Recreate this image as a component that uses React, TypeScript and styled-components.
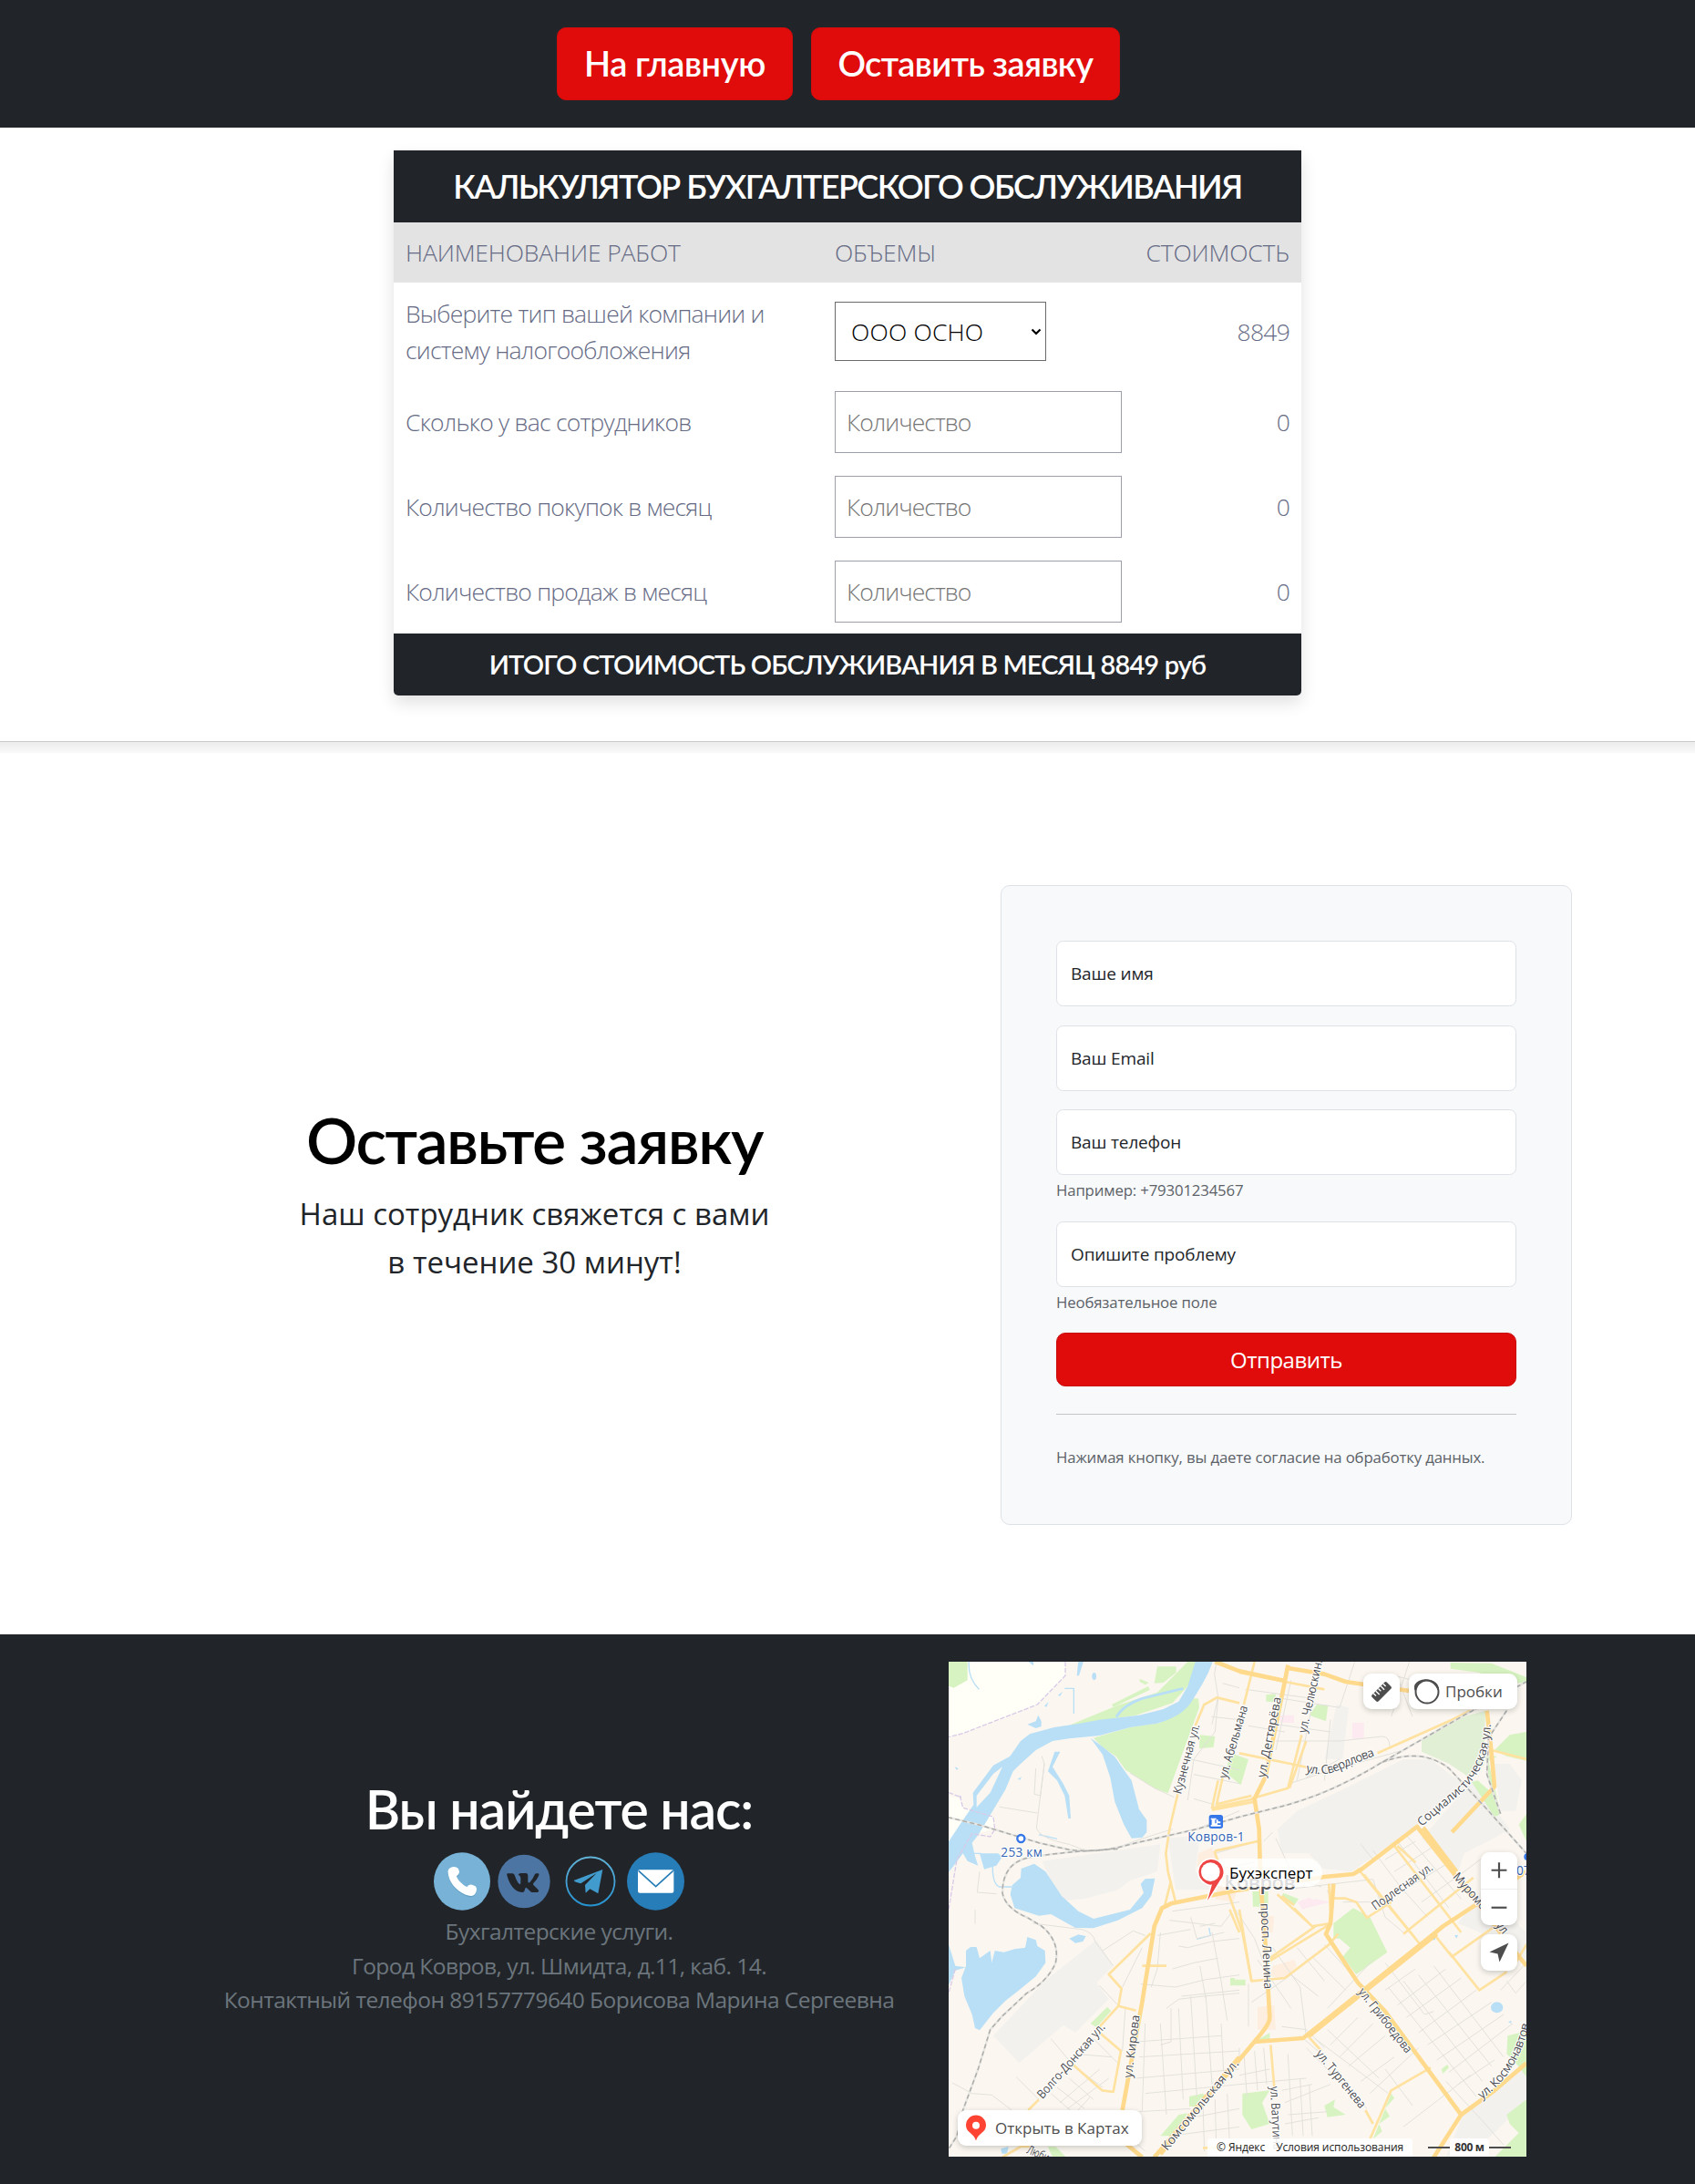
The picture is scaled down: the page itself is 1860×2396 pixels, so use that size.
import React, { useId, useState } from "react";
import styled, { createGlobalStyle } from "styled-components";

const heading = `Lato, "Noto Sans", sans-serif`;
const body = `"Open Sans", "Noto Sans", sans-serif`;

const GlobalStyle = createGlobalStyle`
  *, *::before, *::after { box-sizing: border-box; }
  body { margin: 0; background: #fff; color: #212529; font-family: ${body}; font-size: 20px; line-height: 1.5; }
  h1, h2, p { margin: 0; }
`;

/* ---------- Header ---------- */

const Header = styled.header`
  display: flex;
  justify-content: center;
  gap: 20px;
  height: 140px;
  padding: 30px 20px 30px 0;
  background: #212529;
`;

const NavButton = styled.button<{ $width: number; $spacing: number }>`
  width: ${(p) => p.$width}px;
  height: 80px;
  padding: 0 0 3px;
  border: 1px solid #d30c0c;
  border-radius: 10px;
  background: #df0c0b;
  color: #fff;
  font: 600 38px/1 ${heading};
  letter-spacing: ${(p) => p.$spacing}px;
  white-space: nowrap;
`;

/* ---------- Calculator ---------- */

const Calculator = styled.section`
  width: 996px;
  margin: 25px auto 0;
  border-radius: 0 0 5px 5px;
  overflow: hidden;
`;

const CalculatorShadow = styled.div`
  width: 996px;
  margin: 0 auto;
  border-radius: 5px;
  box-shadow: 0 8px 18px rgba(0, 0, 0, 0.12);
`;

const CalcBar = styled.div<{ $height: number; $size: number; $spacing: number }>`
  display: flex;
  align-items: center;
  justify-content: center;
  height: ${(p) => p.$height}px;
  padding-bottom: 2px;
  background: #212529;
  color: #fff;
  font: 600 ${(p) => p.$size}px/1 ${heading};
  letter-spacing: ${(p) => p.$spacing}px;
  white-space: nowrap;
`;

const CalcRow = styled.div<{ $height: number; $head?: boolean }>`
  display: grid;
  grid-template-columns: 471px 1fr 170px;
  align-items: center;
  height: ${(p) => p.$height}px;
  padding: 0 13px;
  background: ${(p) => (p.$head ? "#e3e3e3" : "#fff")};
  color: #666b85;
  font-size: 26.5px;
  font-weight: 300;
  line-height: 40px;
  letter-spacing: ${(p) => (p.$head ? -0.15 : -0.78)}px;
`;

const Cost = styled.span`
  text-align: right;
`;

const SelectWrap = styled.div`
  position: relative;
  display: flex;
  width: 232px;
  svg {
    position: absolute;
    right: 5px;
    top: 27px;
    pointer-events: none;
  }
`;

const Select = styled.select`
  appearance: none;
  width: 232px;
  height: 65px;
  padding: 0 17px;
  border: 1px solid #6b6b6b;
  border-radius: 0;
  background: #fff;
  color: #000;
  font: 300 26.5px ${body};
  letter-spacing: 0.2px;
`;

const CountInput = styled.input`
  width: 315px;
  height: 68px;
  padding: 0 12px;
  border: 1px solid #9c9eac;
  background: #fff;
  font: 300 26.5px ${body};
  letter-spacing: -0.95px;
  &::placeholder {
    color: #757575;
    opacity: 1;
  }
`;

const Divider = styled.div`
  height: 13px;
  margin-top: 50px;
  border-top: 1px solid #cacaca;
  background: linear-gradient(#ececec, #f9f9f9);
`;

/* ---------- Request ---------- */

const Request = styled.section`
  display: flex;
  align-items: center;
  justify-content: space-between;
  height: 967px;
  padding: 55px 135px 30px 205px;
`;

const Pitch = styled.div`
  width: 763px;
  padding-bottom: 26px;
  text-align: center;
`;

const PitchTitle = styled.h1`
  color: #000;
  font: 600 70px/84px ${heading};
  letter-spacing: -1.5px;
`;

const PitchText = styled.p`
  margin-top: 13px;
  font: 400 33px/53px ${body};
`;

const FormCard = styled.form`
  display: flex;
  flex-direction: column;
  width: 627px;
  height: 702px;
  padding: 60px;
  border: 1px solid #dee2e6;
  border-radius: 10px;
  background: #f8f9fb;
`;

const Field = styled.div`
  flex: none;
  margin-bottom: 20.5px;
`;

const TextInput = styled.input`
  display: block;
  width: 100%;
  height: 72px;
  padding: 0 15px;
  border: 1px solid #dee2e6;
  border-radius: 7.5px;
  background: #fff;
  color: #212529;
  font: 400 19px ${body};
  letter-spacing: -0.15px;
  &::placeholder {
    color: #212529;
    opacity: 1;
  }
`;

const Hint = styled.small`
  display: block;
  height: 30px;
  color: #5c6268;
  font-size: 16.8px;
  line-height: 33px;
  letter-spacing: -0.16px;
`;

const Submit = styled.button`
  height: 59px;
  flex: none;
  border: 1px solid #c90d0d;
  border-radius: 10px;
  background: #df0c0b;
  color: #fff;
  font: 400 24px/1 ${body};
  letter-spacing: -0.5px;
`;

const Rule = styled.hr`
  flex: none;
  width: 100%;
  height: 1px;
  margin: 30px 0;
  border: 0;
  background: #c3c5c8;
`;

/* ---------- Footer ---------- */

const Footer = styled.footer`
  display: flex;
  justify-content: space-between;
  align-items: center;
  height: 603px;
  padding: 0 185px 0 186px;
  background: #212529;
`;

const Contacts = styled.div`
  display: flex;
  flex-direction: column;
  align-items: center;
  width: 855px;
  padding-bottom: 29px;
`;

const ContactsTitle = styled.h2`
  color: #fff;
  font: 600 59px/76px ${heading};
  letter-spacing: -1.1px;
  white-space: nowrap;
`;

const Socials = styled.div`
  display: flex;
  align-items: center;
  gap: 8px;
  height: 64px;
  margin: 9px 0 4px;
`;

const SocialLink = styled.a<{ $gap?: number }>`
  display: flex;
  margin-left: ${(p) => p.$gap ?? 0}px;
`;

const ContactLine = styled.p`
  color: #6c757d;
  font-size: 24.5px;
  line-height: 37.5px;
  white-space: nowrap;
  letter-spacing: -0.55px;
`;

const MapFrame = styled.div`
  position: relative;
  width: 634px;
  height: 543px;
  overflow: hidden;
  background: #fbf7f0;
  font-family: ${body};
`;

const MapSvg = styled.svg`
  display: block;
  width: 634px;
  height: 543px;
`;

const MapControl = styled.div<{ $x: number; $y: number; $w: number; $h: number }>`
  position: absolute;
  left: ${(p) => p.$x}px;
  top: ${(p) => p.$y}px;
  width: ${(p) => p.$w}px;
  height: ${(p) => p.$h}px;
  display: flex;
  align-items: center;
  justify-content: center;
  border-radius: 9px;
  background: #fff;
  box-shadow: 0 2px 6px rgba(0, 0, 0, 0.2);
  color: #4d4d4d;
  font-size: 17px;
  white-space: nowrap;
`;

const LabelledControl = styled(MapControl)<{ $pad: number; $gap: number }>`
  justify-content: flex-start;
  padding-left: ${(p) => p.$pad}px;
  gap: ${(p) => p.$gap}px;
`;

const ZoomControl = styled(MapControl)`
  flex-direction: column;
  svg {
    flex: 1;
  }
  svg + svg {
    border-top: 1px solid #eee;
  }
`;

const PlaceTag = styled.div`
  position: absolute;
  left: 287px;
  top: 216px;
  width: 123px;
  height: 31px;
  padding-left: 21px;
  border-radius: 16px;
  background: rgba(255, 255, 255, 0.8);
  color: #000;
  font-size: 17px;
  line-height: 31px;
`;

const MapNote = styled.div<{ $x: number; $w: number }>`
  position: absolute;
  left: ${(p) => p.$x}px;
  bottom: 0;
  width: ${(p) => p.$w}px;
  height: 20px;
  display: flex;
  justify-content: space-between;
  padding: 0 10px;
  border-radius: 4px 4px 0 0;
  background: rgba(255, 255, 255, 0.88);
  color: #222;
  font-size: 12px;
  line-height: 20px;
  letter-spacing: -0.1px;
  white-space: nowrap;
`;

const ScaleBar = styled.div`
  position: absolute;
  right: 17px;
  bottom: 0;
  display: flex;
  align-items: center;
  width: 91px;
  height: 20px;
  font-size: 12px;
  line-height: 20px;
  color: #333;
  i {
    flex: 1;
    height: 2px;
    background: #4d4d4d;
  }
  b {
    width: 43px;
    border-radius: 4px 4px 0 0;
    background: rgba(255, 255, 255, 0.9);
    text-align: center;
    white-space: nowrap;
    letter-spacing: -0.3px;
  }
`;

const Pin = styled.svg`
  position: absolute;
  left: 269px;
  top: 214px;
`;

/* ---------- Map drawing ---------- */

const WATER = [
  "M815 9H872C855 60 825 105 800 145C775 180 735 200 690 212L600 225L500 252L400 262L345 270L290 300L240 345L215 370L190 430L160 480L130 530L100 580L80 605L90 650L100 680L65 665L50 640L20 680L0 705V605L50 530L85 480L83 440L150 350L205 320L240 270L270 247L350 225L430 213L500 200L630 185L710 165L760 140L790 90Z",
  "M470 260L505 285L550 322L580 365L605 400L630 495L655 530V570L640 588L605 590L580 545L550 470L535 390L510 315Z",
  "M242 690L285 674L322 700L375 780L430 830L480 855L600 825L645 770L635 740L650 724L682 722L670 780L640 820L560 860L480 886L420 885L340 840L300 845L220 820L206 775L212 745L240 720Z",
  "M105 640H165L180 650L160 680L120 692Z",
  "M60 960L75 948H95L105 985L140 960L145 1000L155 960L185 965L220 955L255 950L262 915L290 925L295 945L320 960L322 1000L290 1045L235 1090L190 1125L150 1165L105 1222L90 1215L80 1170L55 1110L45 1050L60 1010Z",
  "M0 930L25 1010L60 1015L25 1025L0 1080Z",
  "M262 215L290 205L298 185L308 205V222L290 228Z",
  "M430 5H448L432 55H425Z",
  "M260 5H282V22Z",
  "M352 305H370L345 355L380 410L400 450L405 525H397L385 450L360 400L330 370Z",
  "M400 920L430 907L455 912L445 930L420 935Z",
  "M175 1612L200 1605L195 1628H178Z",
];

const PARKS = [
  "M3 9H65V70L20 95L0 88Z",
  "M400 218L560 152L690 110L790 9H830L790 90L740 145L620 185Z",
  "M480 260L600 225L700 210L770 170L800 130H825L828 160L725 442L680 425L610 380L585 365L555 322L510 290Z",
  "M690 25H752V45L710 78L680 80Z",
  "M632 65L662 78L650 85L632 75Z",
  "M540 150L660 90L665 102L545 158Z",
  "M830 250L880 255L875 290L828 295Z",
  "M930 310L990 330L965 415L915 375Z",
  "M1048 118L1080 115L1075 142L1048 140Z",
  "M1190 185L1215 150L1252 152L1245 205Z",
  "M1655 12L1790 14L1905 60V80L1820 75L1750 45L1655 32Z",
  "M1800 300L1850 250L1905 240V335L1840 320Z",
  "M1770 320H1810L1780 335L1820 510L1800 520L1725 405L1745 400L1790 440Z",
  "M1880 545L1905 510V600Z",
  "M1270 870L1335 820L1390 850L1447 965L1345 1038L1300 980L1325 950L1290 920L1270 920Z",
  "M1003 765H1055V815H1005Z",
  "M1105 770L1155 790L1140 812L1095 790Z",
  "M470 1200L525 1145L538 1158L490 1212Z",
  "M930 1050H945V1055H980V1075H930Z",
  "M795 1440L840 1430L850 1445L830 1475L795 1472Z",
  "M700 1570L760 1500L790 1495L740 1570Z",
  "M330 1605H355L390 1640H345Z",
  "M970 1430L1060 1420L1035 1460L1060 1530L1000 1548L970 1500Z",
  "M1010 1260L1060 1230V1255Z",
  "M1240 1470L1275 1450L1270 1475L1310 1500L1250 1508Z",
  "M1315 1135L1360 1105L1350 1120L1325 1142Z",
  "M1843 1240L1905 1225V1375L1870 1330L1840 1300Z",
  "M1905 1450L1840 1500L1850 1530L1880 1560L1850 1590L1800 1640H1905Z",
  "M1625 1350L1645 1335L1650 1345L1630 1365Z",
  "M1460 1430L1470 1445L1440 1480L1455 1505L1420 1530L1430 1555L1400 1580Z",
];

const BLOCKS = [
  "M310 665L700 610L690 700L600 730L560 760L450 790L390 795L350 750Z",
  "M1085 560L1150 500L1300 430L1500 330L1590 330L1680 400L1720 410L1550 545L1330 700L1230 690L1190 640L1100 640Z",
  "M150 1240L320 1060L490 925L545 1010L490 1065L530 1120L420 1230L380 1205L235 1330Z",
  "M1560 590L1730 400L1850 560L1780 600L1700 640L1680 700L1630 660Z",
  "M725 590L830 580L815 700L880 760L750 760Z",
  "M1280 150L1320 160L1300 330L1240 330Z",
  "M1680 870L1760 760L1905 900V1000L1800 920Z",
  "M1700 1490L1905 1330V1450L1800 1560L1700 1640H1640Z",
  "M1800 345H1850L1890 400L1870 500H1820Z",
];

const WARM = [
  "M825 640L870 620L900 700L960 740L940 800L880 790L890 740L820 680Z",
  "M1040 850L1075 845L1070 900L1040 900Z",
  "M1070 1010L1140 990L1150 1010L1110 1050L1060 1045Z",
  "M1020 1145L1075 1140L1080 1220H1020Z",
];

const GLADE = "M1560 265L1660 200L1770 170L1765 350L1710 385L1650 345L1560 305Z";

const LANES = [
  "M310 320L318 345L292 555Q300 590 400 610Q480 650 560 620T740 560",
  "M290 360L285 445L305 450L318 345M170 487L295 507M600 375L680 425L745 455M105 700L97 768L160 773",
  "M885 9L878 50L890 125L870 215M868 190L960 200M905 80L960 95M800 330L960 365M790 465L810 330L880 240L890 130M810 380L960 410M810 460L880 480",
  "M15 1395L80 1430L145 1435L230 1500M225 1375L300 1450M340 1250L415 1340L510 1410M420 1300L540 1310M480 1250L560 1330M370 1460L500 1350M395 1480L530 1380M420 1495L470 1440M340 1430L420 1500M360 1410L450 1480M400 1380L480 1450",
  "M635 1070L750 1080L850 1055L960 1040M700 900L690 1020L670 1080M760 945L790 950L870 930L960 920M770 1110L960 1090M720 1150L760 1120L840 1110L960 1100M735 1150V1260L700 1270M740 1020L810 1000L890 985M870 900L900 1060L920 1190M830 880L880 870M830 1010L850 1120",
  "M630 1310L960 1290M620 1380L960 1350M620 1260L900 1240M650 1430L960 1400M700 1200L720 1500M760 1150L775 1450M800 1110L820 1440M850 1110L870 1400M900 1200L910 1400M650 1200L640 1490M630 1490L800 1480",
  "M840 1460L845 1620M880 1450L885 1640M920 1430L930 1640M800 1510L960 1480M730 1570L960 1540M600 1575L650 1620",
  "M960 1280V1340M975 1300L985 1440M1010 1290L1020 1420M1040 1280L1050 1400M1120 1300L1135 1570M1160 1380L1170 1570M1190 1400L1200 1570M960 1370L1060 1350M960 1400L1180 1380M1100 1420L1200 1400M1110 1460L1260 1400M1120 1500L1250 1490M1110 1530L1220 1510",
  "M1180 1280L1380 1480M1210 1250L1450 1430M1250 1220L1420 1380M1160 1240L1230 1300M1260 1270L1350 1180M1290 1310L1400 1200M1320 1340L1440 1240M1360 1390L1470 1310M1390 1430L1550 1280",
  "M1450 1080L1740 1440M1500 1060L1760 1390M1550 1040L1790 1340M1600 1010L1830 1310M1440 1090L1540 1020M1480 1140L1640 1020M1510 1180L1690 1050M1550 1230L1740 1090M1580 1270L1790 1130M1610 1320L1830 1170M1650 1360L1860 1200M1680 1400L1800 1320M1440 1000L1570 1170L1600 1160M1840 1060L1870 1100L1905 1060M1820 1090L1905 1000",
  "M1020 990L1110 1120L1130 1150M1070 950L1160 1080L1180 1240M1150 950L1240 1060M1240 940L1350 1060M1200 980L1310 1090M1100 1210L1180 1220L1240 1280M990 1070V1210M1000 1130L1130 1040L1220 1110M1250 1150L1400 990",
  "M1080 270L1290 270L1430 255Q1455 255 1455 290L1420 310M1080 215L1260 240M1260 200L1240 400M1130 70L1080 300M1100 130L1290 160L1340 9M1220 50L1150 400M980 100L1200 130M990 220L1110 240M1480 60L1530 190M1520 9L1460 190M1450 50L1530 70M1125 410L1250 370L1500 300M1180 390L1290 330",
  "M1040 600L1070 570M1080 590L1140 720L1230 750M1100 760L1400 725M1250 760L1270 820M1300 800L1450 800M1400 725L1440 850L1500 900M1400 630L1490 750L1580 850M1480 600L1650 820M1510 580L1690 790M1440 660L1540 600M1470 700L1610 610M1520 750L1650 670M1560 800L1700 700L1780 640M1360 610L1400 660",
  "M740 830L960 800M730 860L900 880L930 840M690 910L800 890M800 850L820 920L910 900M930 800L1010 920L1040 1000M820 560L960 500M880 640L1020 600M900 690L1010 670M1500 1540L1720 1370M1640 1390L1760 1520L1830 1600M1440 1350L1530 1470",
  "M280 870L440 890Q480 900 485 930L545 1010M510 960L610 895L650 910M640 950L575 1080M500 1075L565 1145M585 1145L575 1290M90 825V872",
];

const MINOR = [
  "M757 445L730 560L718 640L725 700L750 800M735 730L715 810",
  "M890 400L870 490L1010 460M905 390L885 478L1000 450M870 497L1010 470M880 632L1020 600M878 632L920 760",
  "M920 760L970 900L1000 1060L1110 1050L1255 940L1285 905",
  "M668 903L530 1038L572 1085L562 1142L620 1157M562 1142L500 1210M500 1230L570 1290L545 1425L508 1420L412 1335M300 1450L265 1485",
  "M928 825L960 900M840 1610L1000 1600",
  "M1255 740L1260 830M1260 788H1310L1345 800L1380 852L1460 800M1350 690L1560 945M1370 710L1540 920M1470 615L1690 900M1500 905L1730 720M1480 615L1540 670",
  "M1050 1000L1255 875M1085 775L1200 880L1260 870M1060 985L1210 880M1100 780L1140 810M1200 880L1140 820",
  "M1063 1270L1075 1410M1185 1240L1230 1290M1375 1485L1400 1530M1590 1345L1460 1420L1390 1580M1600 905L1660 980L1830 860M1650 965L1750 1090L1840 1030M1905 940L1870 1000",
  "M960 45L1110 75L1240 100M1010 9L975 150M960 310L1200 360M1165 250L1120 425L1000 460M890 128L960 145M845 150L890 125M845 148L815 220M1125 425L1180 270",
  "M1415 310L1660 200L1720 170M180 1640L240 1605H270L310 1640M1790 300L1905 330",
  "M640 1010L720 1010M960 825L1000 1060",
];

const MAJOR = [
  "M880 9L960 40L1110 72M1120 30L1240 50L1310 75L1520 105M1110 72L1045 390L1010 460L1025 560L1030 740L1040 860L1050 1000L1060 1180Q1060 1200 1030 1235L700 1630",
  "M575 1485L640 1130L680 880L705 820L735 805L960 760L1240 717L1335 708L1365 690L1545 552L1905 1010",
  "M1565 555L1675 700M1660 570L1800 420Q1790 300 1775 170",
  "M1010 1260L1170 1248L1600 905L1630 880L1905 700M1270 740L1260 870L1245 905L1350 1065L1440 1160L1690 1500L1600 1640M1690 1500L1800 1420L1905 1330M1190 1240L1240 1200L1610 905",
  "M1120 20L1110 72M575 1485L580 1590L640 1640M680 1640L960 1310",
];

const RAIL = [
  "M0 521L100 545L200 575L300 605L400 628Q500 640 600 610L820 560L960 520L1080 490Q1250 450 1430 340L1700 185L1905 75",
  "M1430 340Q1560 290 1650 360L1780 500L1905 640",
  "M560 625L450 632Q350 640 290 650Q180 660 180 770Q190 820 260 850L310 880Q370 930 355 1000Q330 1060 260 1100L180 1175L140 1220L100 1350L50 1485L30 1570L5 1610",
  "M1840 170L1780 260L1775 380L1820 510",
];

const BORDER =
  "M387 9V55L295 150L50 245L3 257M40 450L50 490L150 520L155 560L140 585L80 575L30 660L3 825M25 1020L3 1100M3 440L45 455";

interface StreetProps {
  x1: number;
  y1: number;
  x2: number;
  y2: number;
  children: string;
}

function Street({ x1, y1, x2, y2, children }: StreetProps) {
  const angle = (Math.atan2(y2 - y1, x2 - x1) * 180) / Math.PI;
  const length = Math.hypot(x2 - x1, y2 - y1);
  return (
    <text transform={`translate(${x1} ${y1}) rotate(${angle})`} textLength={length} lengthAdjust="spacingAndGlyphs">
      {children}
    </text>
  );
}

function CurvedStreet({ d, length, children }: { d: string; length: number; children: string }) {
  const id = useId();
  return (
    <>
      <path id={id} d={d} fill="none" stroke="none" />
      <text textLength={length}>
        <textPath href={`#${id}`}>{children}</textPath>
      </text>
    </>
  );
}

function CityMap() {
  return (
    <MapSvg viewBox="3 9 1902 1629">
      <rect x="0" y="0" width="1910" height="1640" fill="#fbf7f0" />
      <path d="M0 9H387V55L295 150L50 245L0 257ZM0 450L40 460L50 490L150 520L155 560L80 575L0 640Z" fill="#fffff8" />
      <g fill="#f2f1ed">{BLOCKS.map((d) => <path key={d} d={d} />)}</g>
      <g fill="#fdeee0">{WARM.map((d) => <path key={d} d={d} />)}</g>
      <path d="M1095 185H1140V210H1095ZM1332 210H1370V262H1332ZM1150 800L1190 785L1220 800L1170 825ZM1160 825L1210 790L1260 800Z" fill="#fdeaf1" />
      <g fill="#d7f3c1">{PARKS.map((d) => <path key={d} d={d} />)}</g>
      <path d={GLADE} fill="#e1efd5" />
      <g fill="#b8dff6">
        {WATER.map((d) => <path key={d} d={d} />)}
        <ellipse cx="1808" cy="1147" rx="20" ry="18" />
        <ellipse cx="482" cy="57" rx="7" ry="12" />
        <path d="M1590 925L1605 915V925ZM1668 910L1680 908L1675 920ZM1845 1195L1855 1190V1200ZM22 355L35 360L30 366ZM318 155L332 140L325 158ZM362 120L378 107L370 122ZM230 395L243 388L238 398Z" />
      </g>
      <path d="M95 450L150 378L180 355L140 440L95 488Z" fill="#fbf7f0" />
      <g fill="none" stroke="#b8dff6" strokeWidth="6">
        <path d="M555 190Q580 150 640 130L775 97" strokeWidth="9" />
        <path d="M70 9Q65 60 103 100M415 95V180M385 97H415M148 670Q145 740 170 750H210M300 578L360 592M75 640H110M820 922L865 910L860 885" strokeWidth="4" />
      </g>
      <path d={BORDER} fill="none" stroke="#d9cbe8" strokeWidth="4" strokeDasharray="16 5" />
      <g fill="none" stroke="#e3e1dc" strokeWidth="3">{LANES.map((d) => <path key={d} d={d} />)}</g>
      <g fill="none" stroke="#ffe1a0" strokeWidth="8" strokeLinejoin="round">{MINOR.map((d) => <path key={d} d={d} />)}</g>
      <g fill="none" stroke="#ffd98c" strokeWidth="14" strokeLinejoin="round">{MAJOR.map((d) => <path key={d} d={d} />)}</g>
      <g fill="none" stroke="#e6e5e1" strokeWidth="7">{RAIL.map((d) => <path key={d} d={d} />)}</g>
      <g fill="none" stroke="#adadab" strokeWidth="4.5" strokeDasharray="15 10">{RAIL.map((d) => <path key={d} d={d} />)}</g>

      <g fontSize="40" fill="#4c4d51" stroke="#fff" strokeWidth="6" paintOrder="stroke" strokeLinejoin="round">
        <Street x1={768} y1={446} x2={830} y2={218}>Кузнечная ул.</Street>
        <Street x1={918} y1={395} x2={988} y2={158}>ул. Абельмана</Street>
        <Street x1={1045} y1={392} x2={1098} y2={128}>ул. Дегтярёва</Street>
        <Street x1={1180} y1={245} x2={1246} y2={-48}>ул. Челюскинцев</Street>
        <CurvedStreet d="M1178 372Q1240 388 1290 365T1430 310" length={240}>ул. Свердлова</CurvedStreet>
        <CurvedStreet d="M1560 552L1690 442Q1792 350 1788 180" length={425}>Социалистическая ул.</CurvedStreet>
        <Street x1={1408} y1={828} x2={1600} y2={692}>Подлесная ул.</Street>
        <Street x1={1661} y1={718} x2={1835} y2={915}>Муромская ул.</Street>
        <Street x1={1030} y1={805} x2={1042} y2={1087}>просп. Ленина</Street>
        <Street x1={606} y1={1380} x2={632} y2={1173}>ул. Кирова</Street>
        <Street x1={312} y1={1450} x2={520} y2={1213}>Волго-Донская ул.</Street>
        <Street x1={722} y1={1620} x2={960} y2={1333}>Комсомольская ул.</Street>
        <Street x1={1350} y1={1096} x2={1510} y2={1300}>ул. Грибоедова</Street>
        <Street x1={1210} y1={1300} x2={1358} y2={1482}>ул. Тургенева</Street>
        <Street x1={1062} y1={1407} x2={1072} y2={1615}>ул. Ватутина</Street>
        <CurvedStreet d="M1758 1450Q1895 1350 1922 1160" length={300}>ул. Космонавтов</CurvedStreet>
        <Street x1={258} y1={1625} x2={360} y2={1670}>Любимо</Street>
      </g>

      <text x="910" y="760" fontSize="66" fontWeight="600" fill="#55565a" textLength="235" stroke="#fff" strokeWidth="6" paintOrder="stroke">Ковров</text>

      <g fontSize="41" fill="#3363b4" stroke="#fff" strokeWidth="6" paintOrder="stroke">
        <text x="175" y="650" textLength="136">253 км</text>
        <text x="790" y="600" textLength="187">Ковров-1</text>
        <text x="1872" y="711">07</text>
      </g>
      <circle cx="241" cy="591" r="12" fill="#fff" stroke="#3576e8" strokeWidth="7" />
      <circle cx="1909" cy="651" r="12" fill="#3576e8" />
      <rect x="860" y="513" width="46" height="45" rx="8" fill="#3576e8" />
      <path d="M866 524H884V529H880V541H884V529H890V535H898V541H888V546H899V551H866V546H869V529H866Z" fill="#fff" />
    </MapSvg>
  );
}

/* ---------- Icons ---------- */

function PhoneIcon() {
  return (
    <svg width="62" height="64" viewBox="0 0 186 192">
      <ellipse cx="93" cy="96" rx="93" ry="95" fill="#78b3d7" />
      <path d="M49 57C57 47 73 46 81 56L84 65Q85 73 75 80C79 94 95 109 109 115Q117 106 126 108L137 113Q144 119 139 133C134 145 125 148 111 143C76 131 50 101 47 69Q46 61 49 57Z" fill="#5c9abf" transform="translate(0 3)" opacity=".7" />
      <path d="M49 56C57 46 73 45 81 55L84 64Q85 72 75 79C79 93 95 108 109 114Q117 105 126 107L137 112Q144 118 139 132C134 144 125 147 111 142C76 130 50 100 47 68Q46 60 49 56Z" fill="#fff" />
    </svg>
  );
}

function VkIcon() {
  return (
    <svg width="58" height="60" viewBox="0 0 174 180">
      <ellipse cx="87" cy="90" rx="86" ry="88" fill="#4c75a3" />
      <path d="M32 64H49Q54 64 56 69C60 82 65 93 72 99Q76 101 76 94V78Q75 70 68 68Q70 63 77 63H94Q100 63 100 71V91Q102 98 108 91Q117 80 122 68Q124 64 129 64H135Q138 67 135 72C131 82 124 90 118 96Q115 100 119 103L134 118Q138 124 131 126H114Q109 126 105 120Q98 112 94 110Q90 111 89 120Q88 126 82 126C58 127 39 102 31 70Q30 65 32 64Z" fill="#212529" />
    </svg>
  );
}

function TelegramIcon() {
  return (
    <svg width="56" height="56" viewBox="0 0 168 168">
      <defs>
        <linearGradient id="telegram" x1="0" y1="0" x2="0" y2="1">
          <stop offset="0" stopColor="#62b2d8" />
          <stop offset="1" stopColor="#2693d0" />
        </linearGradient>
      </defs>
      <circle cx="84" cy="84" r="79.5" fill="none" stroke="url(#telegram)" strokeWidth="5.5" />
      <path d="M124 45L29 81Q32 87 52 91L104 57L66 96L68 122L82 109L109 124Z" fill="#429bcd" />
    </svg>
  );
}

function MailIcon() {
  return (
    <svg width="63" height="64" viewBox="0 0 189 192">
      <ellipse cx="94.5" cy="96" rx="94.5" ry="95" fill="#267db8" />
      <rect x="36" y="58" width="118" height="76" rx="6" fill="#fff" />
      <path d="M38 61L95 113L152 61" fill="none" stroke="#267db8" strokeWidth="5" />
    </svg>
  );
}

/* ---------- Page ---------- */

const COUNTS = ["Сколько у вас сотрудников", "Количество покупок в месяц", "Количество продаж в месяц"];

export default function App() {
  const [kind, setKind] = useState("osno");
  return (
    <>
      <GlobalStyle />
      <Header>
        <NavButton $width={259} $spacing={-0.4}>На главную</NavButton>
        <NavButton $width={339} $spacing={-0.6}>Оставить заявку</NavButton>
      </Header>

      <CalculatorShadow>
        <Calculator>
          <CalcBar $height={79} $size={36} $spacing={-1.55}>КАЛЬКУЛЯТОР БУХГАЛТЕРСКОГО ОБСЛУЖИВАНИЯ</CalcBar>
          <CalcRow $height={66} $head>
            <span>НАИМЕНОВАНИЕ РАБОТ</span>
            <span>ОБЪЕМЫ</span>
            <Cost>СТОИМОСТЬ</Cost>
          </CalcRow>
          <CalcRow $height={107}>
            <span>
              Выберите тип вашей компании и<br />
              систему налогообложения
            </span>
            <SelectWrap>
              <Select value={kind} onChange={(e) => setKind(e.target.value)}>
                <option value="osno">ООО ОСНО</option>
              </Select>
              <svg width="12" height="12" viewBox="0 0 12 12">
                <path d="M1.5 3.5L6 8L10.5 3.5" fill="none" stroke="#000" strokeWidth="2.2" />
              </svg>
            </SelectWrap>
            <Cost>8849</Cost>
          </CalcRow>
          {COUNTS.map((label) => (
            <CalcRow $height={92.7} key={label}>
              <span>{label}</span>
              <CountInput placeholder="Количество" />
              <Cost>0</Cost>
            </CalcRow>
          ))}
          <CalcBar $height={68} $size={29} $spacing={-0.85}>ИТОГО СТОИМОСТЬ ОБСЛУЖИВАНИЯ В МЕСЯЦ 8849 руб</CalcBar>
        </Calculator>
      </CalculatorShadow>
      <Divider />

      <Request>
        <Pitch>
          <PitchTitle>Оставьте заявку</PitchTitle>
          <PitchText>
            Наш сотрудник свяжется с вами
            <br />в течение 30 минут!
          </PitchText>
        </Pitch>
        <FormCard>
          <Field>
            <TextInput placeholder="Ваше имя" />
          </Field>
          <Field>
            <TextInput placeholder="Ваш Email" />
          </Field>
          <Field>
            <TextInput placeholder="Ваш телефон" />
            <Hint>Например: +79301234567</Hint>
          </Field>
          <Field>
            <TextInput placeholder="Опишите проблему" />
            <Hint>Необязательное поле</Hint>
          </Field>
          <Submit type="button">Отправить</Submit>
          <Rule />
          <Hint>Нажимая кнопку, вы даете согласие на обработку данных.</Hint>
        </FormCard>
      </Request>

      <Footer>
        <Contacts>
          <ContactsTitle>Вы найдете нас:</ContactsTitle>
          <Socials>
            <SocialLink>
              <PhoneIcon />
            </SocialLink>
            <SocialLink>
              <VkIcon />
            </SocialLink>
            <SocialLink $gap={7.5}>
              <TelegramIcon />
            </SocialLink>
            <SocialLink $gap={4}>
              <MailIcon />
            </SocialLink>
          </Socials>
          <ContactLine>Бухгалтерские услуги.</ContactLine>
          <ContactLine>Город Ковров, ул. Шмидта, д.11, каб. 14.</ContactLine>
          <ContactLine>Контактный телефон 89157779640 Борисова Марина Сергеевна</ContactLine>
        </Contacts>

        <MapFrame>
          <CityMap />
          <PlaceTag>Бухэксперт</PlaceTag>
          <Pin width="34" height="54" viewBox="0 0 102 162">
            <path d="M55 9A41 41 0 0 0 40 87Q52 94 60 91L45 145L86 78A41 41 0 0 0 55 9Z" fill="#ed4543" stroke="#fff" strokeWidth="9" paintOrder="stroke" />
            <circle cx="55" cy="50" r="31" fill="#fff" />
          </Pin>
          <MapControl $x={455} $y={13} $w={40} $h={39}>
            <svg width="24" height="24" viewBox="0 0 24 24">
              <g transform="rotate(-45 12 12)">
                <rect x="0.5" y="7" width="23" height="10" rx="2" fill="#4d4d4d" />
                <path d="M4.5 7V11M8.2 7V12.5M12 7V11M15.8 7V12.5M19.5 7V11" stroke="#fff" strokeWidth="1.4" />
              </g>
            </svg>
          </MapControl>
          <LabelledControl $x={505} $y={13} $w={119} $h={39} $pad={5} $gap={6}>
            <svg width="29" height="29" viewBox="0 0 29 29">
              <circle cx="15" cy="15" r="12.5" fill="#fff" stroke="#4d4d4d" strokeWidth="2" />
              <path d="M1 12Q0 6 6 3Q12 0 18 2Q29 4 28 16Q25 8 20 5Q13 1 7 5Q4 8 3 14Q1 14 1 12Z" fill="#4d4d4d" />
            </svg>
            <span>Пробки</span>
          </LabelledControl>
          <ZoomControl $x={584} $y={209} $w={40} $h={80}>
            <svg width="40" height="40" viewBox="0 0 40 40">
              <path d="M11.5 20H28.5M20 11.5V28.5" stroke="#4d4d4d" strokeWidth="2.2" />
            </svg>
            <svg width="40" height="40" viewBox="0 0 40 40">
              <path d="M11.5 20H28.5" stroke="#4d4d4d" strokeWidth="2.2" />
            </svg>
          </ZoomControl>
          <MapControl $x={584} $y={299} $w={40} $h={40}>
            <svg width="22" height="22" viewBox="0 0 22 22">
              <path d="M21.5 0.5L11.5 21.5L9.5 12.5L0.5 10.5Z" fill="#4d4d4d" />
            </svg>
          </MapControl>
          <LabelledControl $x={10} $y={492} $w={202} $h={39} $pad={8} $gap={9}>
            <svg width="24" height="29" viewBox="0 0 24 29">
              <path d="M12 0.5A11 11 0 0 0 1 11.5C1 20 9.5 19.5 12 28.5C14.5 19.5 23 20 23 11.5A11 11 0 0 0 12 0.5Z" fill="#ff4433" />
              <circle cx="12" cy="11.8" r="4" fill="#fff" />
            </svg>
            <span>Открыть в Картах</span>
          </LabelledControl>
          <MapNote $x={284} $w={225}>
            <span>© Яндекс</span>
            <span>Условия использования</span>
          </MapNote>
          <ScaleBar>
            <i />
            <b>800 м</b>
            <i />
          </ScaleBar>
        </MapFrame>
      </Footer>
    </>
  );
}
